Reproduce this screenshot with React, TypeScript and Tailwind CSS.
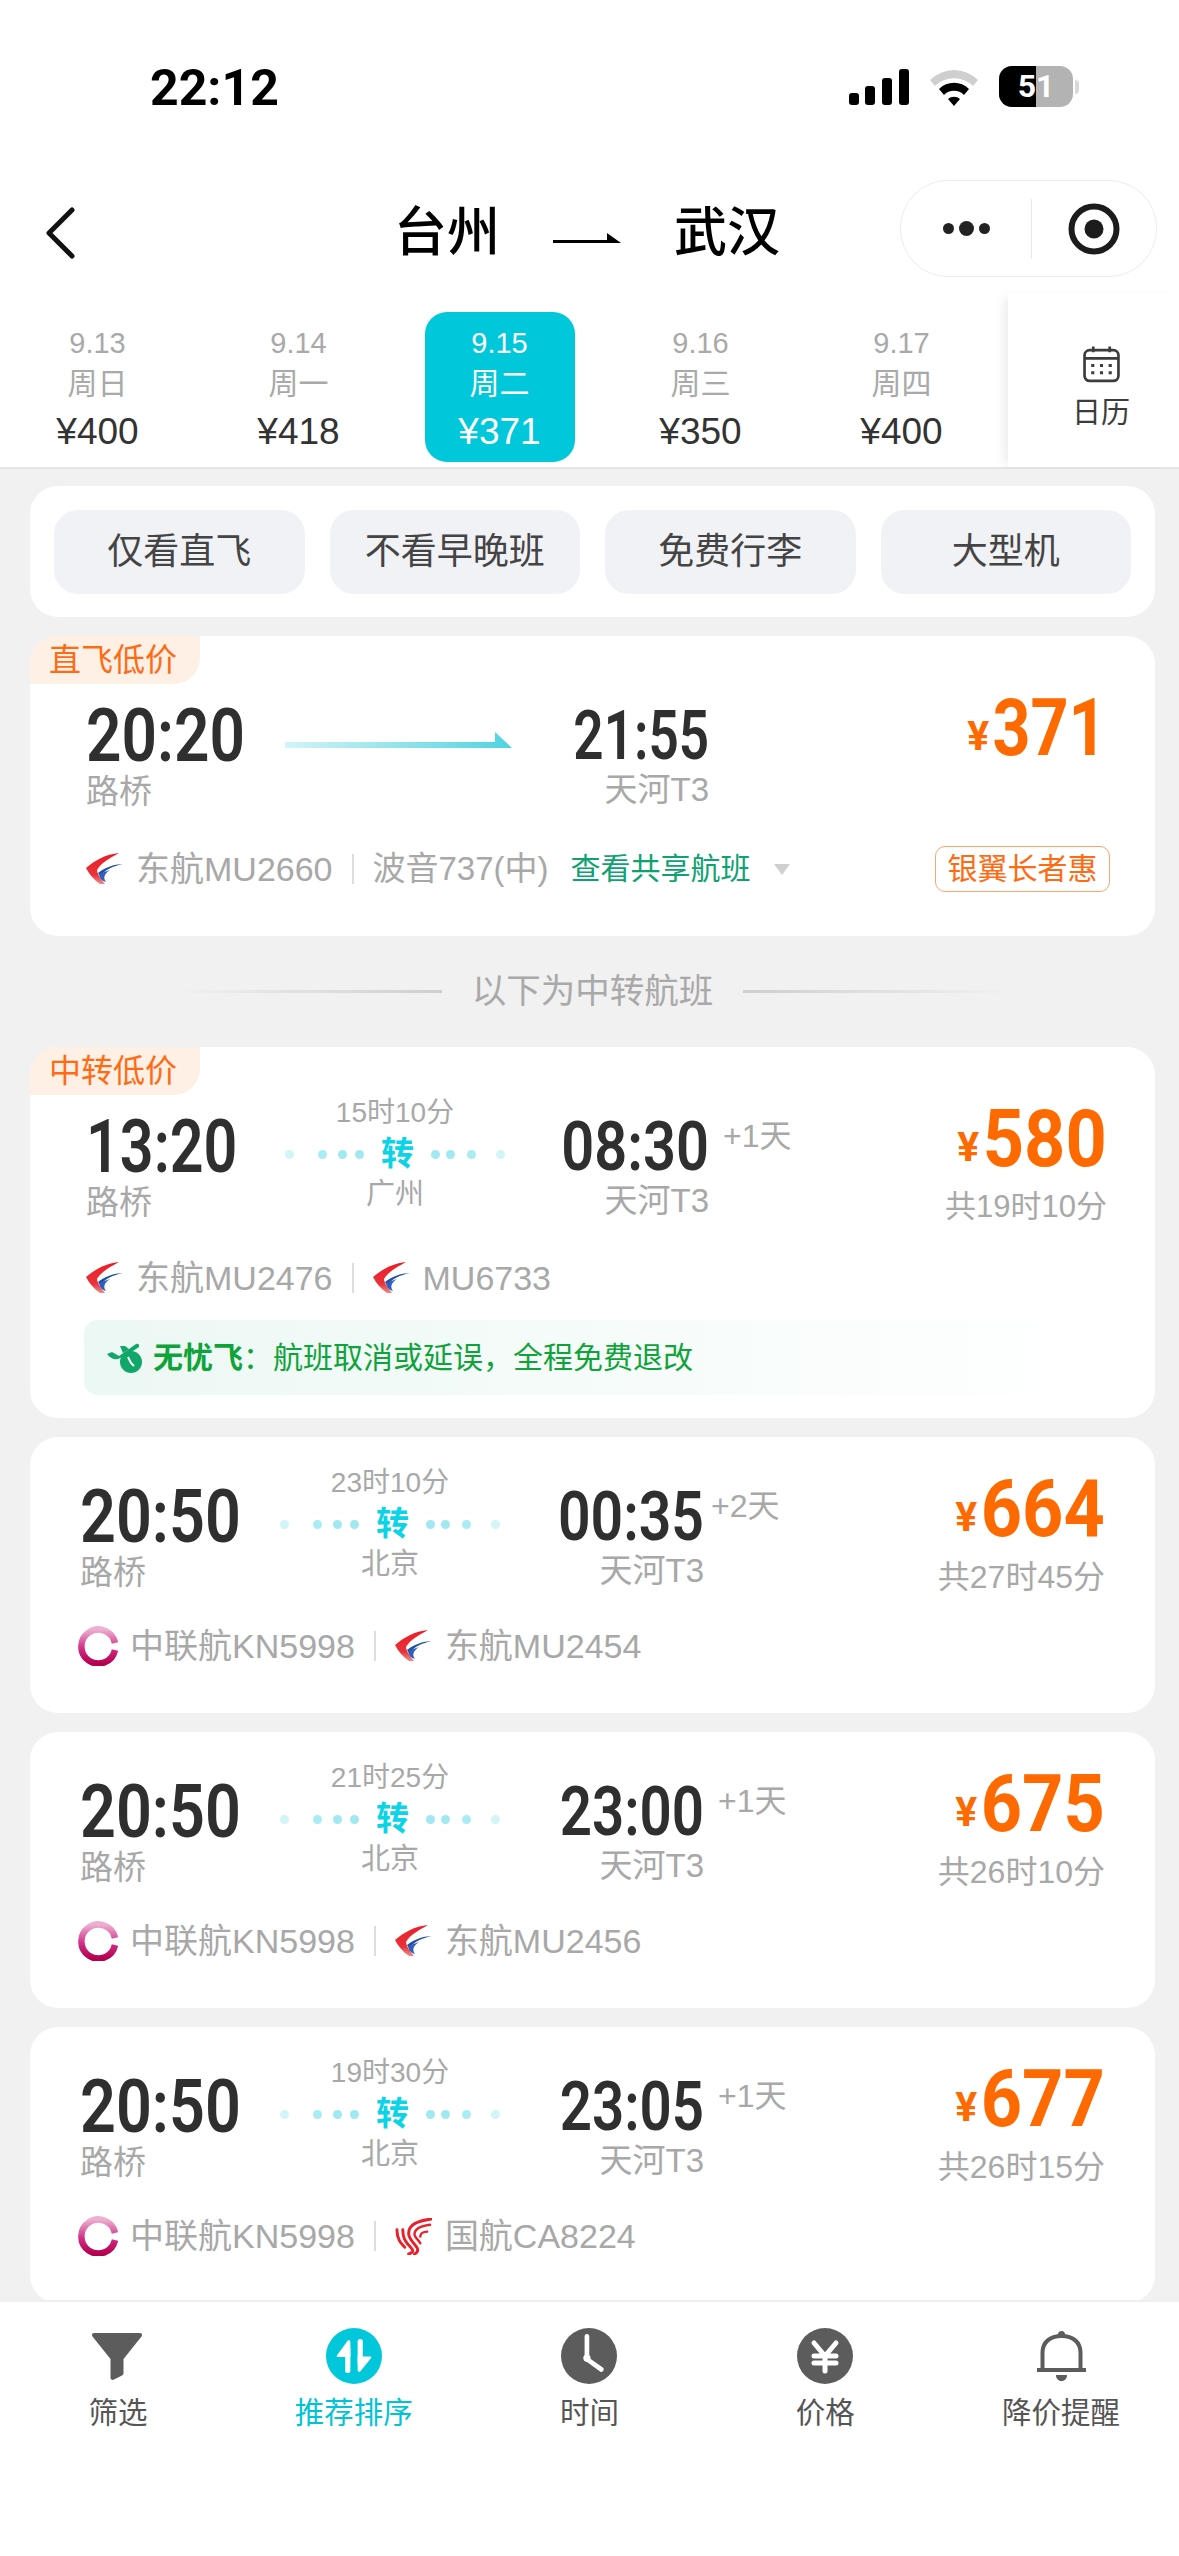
import React from "react";

const Eastern = () => (
  <svg viewBox="0 0 37 32" className="w-[37px] h-[32px] my-[2px] shrink-0">
    <defs>
      <linearGradient id="ea" x1="0" y1="0" x2="0" y2="1">
        <stop offset="0" stopColor="#ee1c25" />
        <stop offset="0.7" stopColor="#e8323a" />
        <stop offset="1" stopColor="#f08a8a" />
      </linearGradient>
    </defs>
    <path d="M33 0C20 1 8 8 0 15C3 21 8 27 14 31L19 31C14 25 11 20 11 17C15 10 24 5 33 0Z" fill="url(#ea)" />
    <path d="M37 11C28 11 18 15 12 20L14 23C19 17 27 13 37 11Z" fill="#1f4da8" />
    <path d="M13 21C14 26 16 28 20 29C17 25 18 21 24 17Z" fill="#2f5fb8" />
  </svg>
);

const Kunming = () => (
  <svg viewBox="0 0 40 40" className="w-[40px] h-[40px] shrink-0 -ml-[2px] -mr-[1px]">
    <defs>
      <linearGradient id="kn" x1="0" y1="0" x2="0" y2="1">
        <stop offset="0" stopColor="#eeb0d2" />
        <stop offset="0.55" stopColor="#cf2f86" />
        <stop offset="1" stopColor="#b5004f" />
      </linearGradient>
    </defs>
    <path d="M37 17A17 17 0 1 0 37 24" fill="none" stroke="url(#kn)" strokeWidth="6.5" />
  </svg>
);

const AirChina = () => (
  <svg viewBox="0 0 38 38" className="w-[37px] h-[37px] shrink-0" fill="none" stroke="#e8202a" strokeLinecap="round">
    <path d="M2 12C2 22 6 26 10 30" strokeWidth="3" />
    <path d="M8 12C8 20 10 24 16 30C20 34 18 36 14 37" strokeWidth="3" />
    <path d="M37 1C24 3 14 6 14 16C14 22 20 26 23 31C24 34 22 36 20 37" strokeWidth="3" />
    <path d="M36 7C28 8 20 10 20 17C20 20 24 22 26 26" strokeWidth="2.5" />
    <path d="M33 14C29 14 26 16 26 19" strokeWidth="2.5" />
  </svg>
);

const DotsL = () => (
  <div className="flex items-center">
    <span className="w-[9px] h-[9px] rounded-full bg-[#d2f5f8]" />
    <span className="w-[9px] h-[9px] rounded-full bg-[#a9ecf2] ml-[24px]" />
    <span className="w-[9px] h-[9px] rounded-full bg-[#a0e9f0] ml-[11px]" />
    <span className="w-[9px] h-[9px] rounded-full bg-[#a0e9f0] ml-[8px]" />
  </div>
);

const DotsR = () => (
  <div className="flex items-center">
    <span className="w-[9px] h-[9px] rounded-full bg-[#a0e9f0]" />
    <span className="w-[9px] h-[9px] rounded-full bg-[#a0e9f0] ml-[6px]" />
    <span className="w-[9px] h-[9px] rounded-full bg-[#a9ecf2] ml-[12px]" />
    <span className="w-[9px] h-[9px] rounded-full bg-[#d2f5f8] ml-[20px]" />
  </div>
);

const Badge = ({ text }: { text: string }) => (
  <div className="absolute left-0 top-0 w-[170px] h-[48px] bg-[#fff0e6] rounded-tl-[26px] rounded-br-[26px] text-[#ff6a13] text-[32px] leading-[48px] pl-[19px]">
    {text}
  </div>
);

type Seg = { logo: "e" | "k" | "a"; text: string };

type Flight = {
  dep: string;
  arr: string;
  plus?: string;
  plusClass?: string;
  depScale: string;
  arrScale: string;
  dur?: string;
  city?: string;
  price: string;
  total?: string;
  totalClass?: string;
  segs: Seg[];
  badge?: string;
  wide?: boolean;
};

const Logo = ({ k }: { k: Seg["logo"] }) => (k === "e" ? <Eastern /> : k === "k" ? <Kunming /> : <AirChina />);

const Sep = () => <span className="w-[2px] h-[30px] bg-[#dedede] mx-[19px]" />;

function Main({ f }: { f: Flight }) {
  return (
    <div className="flex items-start">
      <div className={f.wide ? "w-[199px]" : "w-[200px]"}>
        <div className={`font-['Roboto'] font-semibold text-[74px] leading-[72px] text-[#2f2f2f] origin-left whitespace-nowrap ${f.depScale}`}>{f.dep}</div>
        <div className="text-[33px] leading-[40px] text-[#a8a8a8]">路桥</div>
      </div>
      <div className="w-[220px]">
        {f.dur ? (
          <div className="-mt-[16px] flex flex-col items-center text-[#a8a8a8]">
            <div className="text-[28px] leading-[36px]">{f.dur}</div>
            <div className="mt-[3px] w-full flex items-center justify-between h-[40px]">
              <DotsL />
              <span className="text-[33px] leading-[40px] font-bold text-[#0cd3e6]">转</span>
              <DotsR />
            </div>
            <div className="text-[29px] leading-[40px]">{f.city}</div>
          </div>
        ) : (
          <svg viewBox="0 0 227 20" className="w-[227px] h-[20px] mt-[32px]">
            <defs>
              <linearGradient id="ar" x1="0" x2="1" y1="0" y2="0">
                <stop offset="0" stopColor="#d4f4f7" />
                <stop offset="1" stopColor="#4fd3e0" />
              </linearGradient>
            </defs>
            <path d="M0 10H210V0L227 16H0Z" fill="url(#ar)" />
          </svg>
        )}
      </div>
      <div className="w-[204px] relative text-right">
        <div className={`font-['Roboto'] font-semibold text-[68px] leading-[72px] text-[#2f2f2f] origin-right whitespace-nowrap ${f.arrScale}`}>{f.arr}</div>
        {f.plus && <span className={`absolute top-[5px] text-[32px] leading-[40px] text-[#a8a8a8] whitespace-nowrap ${f.plusClass}`}>{f.plus}</span>}
        <div className="-mt-[2px] text-[33px] leading-[40px] text-[#a8a8a8]">天河T3</div>
      </div>
      <div className="flex-1 flex flex-col items-end">
        <div className="-mt-[8px] flex items-baseline h-[72px] text-[#ff6a00] font-['Roboto'] font-bold leading-[72px]">
          <span className="text-[41px] relative -top-[5px]">¥</span>
          <span className={`text-[80px] origin-right whitespace-nowrap ${f.price === "371" ? "scale-x-[0.83] -ml-[20px]" : "scale-x-[0.9] -ml-[10px]"}`}>{f.price}</span>
        </div>
        {f.total && <div className={`mt-[12px] leading-[40px] text-[#a8a8a8] whitespace-nowrap ${f.totalClass ?? "text-[32px]"}`}>{f.total}</div>}
      </div>
    </div>
  );
}

function Segs({ segs }: { segs: Seg[] }) {
  return (
    <div className="flex items-center h-[44px]">
      {segs.map((s, i) => (
        <React.Fragment key={i}>
          {i > 0 && <Sep />}
          <div className="flex items-center gap-[13px]">
            <Logo k={s.logo} />
            <span className="text-[34px] leading-[44px] text-[#a8a8a8] whitespace-nowrap">{s.text}</span>
          </div>
        </React.Fragment>
      ))}
    </div>
  );
}

function Card({ f, className, children, body }: { f: Flight; className: string; children?: React.ReactNode; body?: string }) {
  return (
    <div className={`relative bg-white rounded-[28px] shrink-0 ${className}`}>
      {f.badge && <Badge text={f.badge} />}
      <Main f={f} />
      <div className={body}>
        <Segs segs={f.segs} />
      </div>
      {children}
    </div>
  );
}

const Status = () => (
  <div className="h-[180px] flex items-start justify-between pl-[150px] pr-[100px] pt-[60px]">
    <span className="font-['Roboto'] font-bold text-[50px] leading-[56px] text-black">22:12</span>
    <div className="flex items-center gap-[20px] pt-[6px]">
      <svg viewBox="0 0 60 36" className="w-[60px] h-[36px] -ml-[4px]" fill="#000">
        <rect x="0" y="24" width="10" height="12" rx="3" />
        <rect x="16" y="17" width="10" height="19" rx="3" />
        <rect x="33" y="9" width="10" height="27" rx="3" />
        <rect x="50" y="0" width="10" height="36" rx="3" />
      </svg>
      <svg viewBox="0 0 50 38" className="w-[50px] h-[38px]">
        <path d="M1 12A34 34 0 0 1 49 12L44 18A27 27 0 0 0 6 18Z" fill="#cfcfcf" />
        <path d="M10 21A21 21 0 0 1 40 21L35 27A14 14 0 0 0 15 27Z" fill="#000" />
        <path d="M19 31A9 9 0 0 1 31 31L25 38Z" fill="#000" />
      </svg>
      <div className="flex items-center">
        <div className="relative w-[74px] h-[41px] rounded-[13px] overflow-hidden bg-[#b3b3b3] flex">
          <div className="w-[37px] h-full bg-black" />
          <span className="absolute inset-0 text-center font-['Roboto'] font-bold text-[32px] leading-[41px] text-white">51</span>
        </div>
        <span className="w-[4px] h-[14px] rounded-r-[4px] bg-[#d9d9d9] ml-[2px]" />
      </div>
    </div>
  </div>
);

const Header = () => (
  <div className="relative h-[115px] flex items-start justify-center pt-[25px]">
    <svg viewBox="0 0 30 52" className="absolute left-[45px] top-[27px] w-[30px] h-[52px]" fill="none" stroke="#111" strokeWidth="5" strokeLinecap="round" strokeLinejoin="round">
      <path d="M27 3L4 26L27 49" />
    </svg>
    <div className="flex items-center text-[53px] leading-[56px] font-medium text-black -ml-[5px]">
      <span>台州</span>
      <svg viewBox="0 0 68 14" className="w-[68px] h-[14px] mx-[53px] mt-[10px]">
        <path d="M0 9H54L54 2L68 12H0Z" fill="#000" />
      </svg>
      <span>武汉</span>
    </div>
    <div className="absolute right-[22px] top-0 w-[257px] h-[97px] rounded-[48px] border border-[#ececec] bg-white flex items-center">
      <div className="w-[130px] flex items-center justify-center gap-[5px]">
        <span className="w-[11px] h-[11px] rounded-full bg-[#222]" />
        <span className="w-[15px] h-[15px] rounded-full bg-[#222]" />
        <span className="w-[11px] h-[11px] rounded-full bg-[#222]" />
      </div>
      <span className="w-px h-[60px] bg-[#e8e8e8]" />
      <div className="flex-1 flex items-center justify-center">
        <svg viewBox="0 0 52 52" className="w-[52px] h-[52px]">
          <circle cx="26" cy="26" r="22.5" fill="none" stroke="#1c1c1c" strokeWidth="6" />
          <circle cx="26" cy="26" r="9.5" fill="#1c1c1c" />
        </svg>
      </div>
    </div>
  </div>
);

const days = [
  ["9.13", "周日", "¥400"],
  ["9.14", "周一", "¥418"],
  ["9.15", "周二", "¥371"],
  ["9.16", "周三", "¥350"],
  ["9.17", "周四", "¥400"],
];

const DateBar = () => (
  <div className="h-[174px] bg-white border-b-2 border-[#e6e6e6] flex">
    <div className="w-[1005px] flex -ml-[3px] pt-[17px] shrink-0">
      {days.map((d, i) => (
        <div key={d[0]} className="flex-1 flex justify-center">
          <div className={`w-[150px] h-[150px] rounded-[22px] flex flex-col items-center ${i === 2 ? "bg-[#00c7d9] text-white" : "text-[#a9a9a9]"}`}>
            <span className="text-[29px] leading-[36px] mt-[13px]">{d[0]}</span>
            <span className="text-[30px] leading-[40px] mt-[3px]">{d[1]}</span>
            <span className={`text-[37px] leading-[44px] mt-[6px] ${i === 2 ? "text-white" : "text-[#333]"}`}>{d[2]}</span>
          </div>
        </div>
      ))}
    </div>
    <div className="flex-1 flex flex-col items-center pl-[15px] ml-[6px] pt-[52px] shadow-[-8px_0_10px_-4px_rgba(0,0,0,0.08)] -mt-px">
      <svg viewBox="0 0 36 36" className="w-[37px] h-[37px]" fill="none" stroke="#3c3c3c" strokeWidth="2.6">
        <rect x="1.5" y="4" width="33" height="30" rx="5" />
        <path d="M1.5 12H34.5M10 0.5V6M26 0.5V6" />
        <path d="M8 19H11M16.5 19H19.5M25 19H28M8 26H11M16.5 26H19.5M25 26H28" strokeWidth="3" />
      </svg>
      <span className="text-[29px] leading-[40px] text-[#3c3c3c] mt-[10px]">日历</span>
    </div>
  </div>
);

const filters = ["仅看直飞", "不看早晚班", "免费行李", "大型机"];

const Filters = () => (
  <div className="bg-white rounded-[28px] h-[131px] px-[24px] grid grid-cols-4 gap-x-[25px] items-center shrink-0">
    {filters.map((t) => (
      <div key={t} className="h-[84px] rounded-[24px] bg-[#f1f2f6] flex items-center justify-center text-[36px] text-[#444]">
        {t}
      </div>
    ))}
  </div>
);

const Divider = () => (
  <div className="h-[111px] flex items-center justify-center gap-[30px] shrink-0">
    <span className="w-[268px] h-[3px] bg-gradient-to-r from-transparent to-[#cfcfcf]" />
    <span className="text-[34.5px] text-[#a9a9a9]">以下为中转航班</span>
    <span className="w-[268px] h-[3px] bg-gradient-to-r from-[#cfcfcf] to-transparent" />
  </div>
);

const Tab = ({ label, active, children }: { label: string; active?: boolean; children: React.ReactNode }) => (
  <div className="flex flex-col items-center">
    <div className="h-[60px] flex items-center justify-center">{children}</div>
    <span className={`text-[29.5px] leading-[40px] mt-[7px] whitespace-nowrap ${active ? "text-[#00c4d6]" : "text-[#555]"}`}>{label}</span>
  </div>
);

const Bottom = () => {
  const g = "#5c5c5c";
  return (
    <div className="h-[256px] bg-white border-t-2 border-[#efefef] grid grid-cols-5 shrink-0 pt-[24px] items-start">
      <Tab label="筛选">
        <svg viewBox="0 0 50 47" className="w-[50px] h-[47px] -ml-[2px]">
          <path d="M2 0H48C50 0 50.5 2 49.5 3.5L31.5 26V40C31.5 41 31 42 30 42.5L22 46.5C20 47.5 18.5 46.5 18.5 44.5V26L0.5 3.5C-0.5 2 0 0 2 0Z" fill={g} />
        </svg>
      </Tab>
      <Tab label="推荐排序" active>
        <svg viewBox="0 0 54 54" className="w-[56px] h-[56px]">
          <circle cx="27" cy="27" r="27" fill="#00c7d9" />
          <path d="M21 12L10.5 26.5C10 27.5 10.5 28 11.5 28H23.5V14C23.5 12 22 11 21 12Z" fill="#fff" />
          <path d="M21 20V41" stroke="#fff" strokeWidth="5" strokeLinecap="round" />
          <path d="M33 42L43.5 29C44 28 43.5 27.5 42.5 27.5H30.5V40C30.5 42 32 43 33 42Z" fill="#fff" />
          <path d="M33 13V33" stroke="#fff" strokeWidth="5" strokeLinecap="round" />
        </svg>
      </Tab>
      <Tab label="时间">
        <svg viewBox="0 0 54 54" className="w-[56px] h-[56px]">
          <circle cx="27" cy="27" r="27" fill={g} />
          <path d="M25 8V30L39 40" fill="none" stroke="#fff" strokeWidth="4.5" strokeLinecap="round" strokeLinejoin="round" />
          <circle cx="25" cy="29" r="3.5" fill="#fff" />
        </svg>
      </Tab>
      <Tab label="价格">
        <svg viewBox="0 0 56 56" className="w-[56px] h-[56px]">
          <circle cx="28" cy="28" r="28" fill={g} />
          <path d="M17 15L28 28L39 15M28 28V43M17 28H39M17 35H39" fill="none" stroke="#fff" strokeWidth="5" strokeLinecap="round" strokeLinejoin="round" />
        </svg>
      </Tab>
      <Tab label="降价提醒">
        <svg viewBox="0 0 49 50" className="w-[49px] h-[50px]">
          <circle cx="24.5" cy="3.5" r="3.5" fill={g} />
          <path d="M5.5 37V22C5.5 11 13 5 24.5 5C36 5 43.5 11 43.5 22V37" fill="none" stroke={g} strokeWidth="4" />
          <rect x="0" y="37" width="49" height="4" fill={g} />
          <path d="M19 44H30C30 48 27 50 24.5 50C22 50 19 48 19 44Z" fill={g} />
        </svg>
      </Tab>
    </div>
  );
};

const direct: Flight = { dep: "20:20", arr: "21:55", depScale: "scale-x-[0.84]", arrScale: "scale-x-[0.78]", price: "371", segs: [], badge: "直飞低价", wide: true };
const lowest: Flight = {
  dep: "13:20", arr: "08:30", depScale: "scale-x-[0.8]", arrScale: "scale-x-[0.85]", plus: "+1天", plusClass: "left-[218px]", dur: "15时10分", city: "广州", price: "580", total: "共19时10分", totalClass: "text-[31px]", badge: "中转低价", wide: true,
  segs: [{ logo: "e", text: "东航MU2476" }, { logo: "e", text: "MU6733" }],
};
const others: Flight[] = [
  { dep: "20:50", arr: "00:35", depScale: "scale-x-[0.85]", arrScale: "scale-x-[0.84]", plus: "+2天", plusClass: "left-[211px]", dur: "23时10分", city: "北京", price: "664", total: "共27时45分", segs: [{ logo: "k", text: "中联航KN5998" }, { logo: "e", text: "东航MU2454" }] },
  { dep: "20:50", arr: "23:00", depScale: "scale-x-[0.85]", arrScale: "scale-x-[0.83]", plus: "+1天", plusClass: "left-[218px]", dur: "21时25分", city: "北京", price: "675", total: "共26时10分", segs: [{ logo: "k", text: "中联航KN5998" }, { logo: "e", text: "东航MU2456" }] },
  { dep: "20:50", arr: "23:05", depScale: "scale-x-[0.85]", arrScale: "scale-x-[0.83]", plus: "+1天", plusClass: "left-[218px]", dur: "19时30分", city: "北京", price: "677", total: "共26时15分", segs: [{ logo: "k", text: "中联航KN5998" }, { logo: "a", text: "国航CA8224" }] },
];

export default function App() {
  return (
    <div className="w-[1179px] h-[2556px] overflow-hidden flex flex-col bg-white font-['Liberation_Sans','Noto_Sans_CJK_SC',sans-serif]">
      <Status />
      <Header />
      <DateBar />
      <div className="flex-1 min-h-0 overflow-hidden bg-[#f1f1f1] pl-[30px] pr-[24px] pt-[17px] flex flex-col">
        <Filters />
        <div className="relative bg-white rounded-[28px] mt-[19px] h-[300px] pt-[64px] pl-[56px] pr-[48px] shrink-0">
          <Badge text={direct.badge!} />
          <Main f={direct} />
          <div className="mt-[34px] flex items-center">
            <div className="flex items-center gap-[13px]">
              <Eastern />
              <span className="text-[34px] leading-[44px] text-[#a8a8a8] whitespace-nowrap">东航MU2660</span>
            </div>
            <Sep />
            <span className="text-[33px] leading-[44px] text-[#a8a8a8] whitespace-nowrap">波音737(中)</span>
            <span className="ml-[22px] text-[30px] leading-[44px] text-[#0ea271] whitespace-nowrap">查看共享航班</span>
            <span className="ml-[23px] w-0 h-0 border-x-[8px] border-x-transparent border-t-[11px] border-t-[#d0d0d0]" />
            <span className="ml-auto -mr-[3px] w-[175px] h-[46px] rounded-[10px] border border-[#f9a56e] text-[#ff6a13] text-[30px] leading-[44px] text-center whitespace-nowrap">银翼长者惠</span>
          </div>
        </div>
        <Divider />
        <Card f={lowest} className="h-[371px] pt-[64px] pl-[56px] pr-[48px]" body="mt-[29px]">
          <div className="mt-[20px] -ml-[2px] -mr-[3px] h-[75px] rounded-[14px] bg-gradient-to-r from-[#ecf8f4] to-white flex items-center pl-[23px]">
            <svg viewBox="0 0 36 30" className="w-[36px] h-[30px] mr-[10px]">
              <path d="M0 11L5 9L12 13L29 1C31 0 33 2 32 4C25 9 18 13 11 16C7 17 3 15 0 11Z" fill="#12a76a" />
              <path d="M13 3L18 3L22 6L16 10Z" fill="#12a76a" />
              <circle cx="24" cy="19" r="11" fill="#12a76a" />
              <path d="M21 14L24 20L27 23" fill="none" stroke="#fff" strokeWidth="2" />
            </svg>
            <span className="text-[30px] font-bold text-[#0fa33a]">无忧飞</span>
            <span className="text-[30px] text-[#0fa33a] whitespace-nowrap">：航班取消或延误，全程免费退改</span>
          </div>
        </Card>
        {others.map((f) => (
          <Card key={f.price} f={f} className="mt-[19px] pt-[44px] pl-[50px] pr-[50px] h-[276px]" body="mt-[27px]" />
        ))}
      </div>
      <Bottom />
    </div>
  );
}
